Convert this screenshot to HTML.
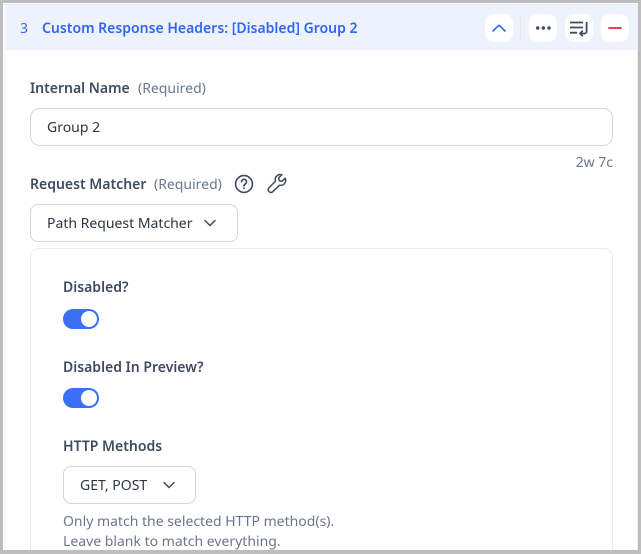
<!DOCTYPE html>
<html><head><meta charset="utf-8"><style>
html,body{margin:0;padding:0;width:641px;height:554px;overflow:hidden}
body{position:relative;background:#bdbdbd;font-family:"Noto Sans","Noto Sans CJK SC","Liberation Sans",sans-serif;font-size:14px}
#r{position:absolute;left:0;top:0;width:641px;height:554px;overflow:hidden}
#r div,#r svg{position:absolute}
#r .t{white-space:nowrap;line-height:20px;margin-top:1px}
.lab{color:#3f4a5f;font-weight:600}
.req{color:#6b7689;font-weight:400}
.btn{background:#fff;border-radius:9px;width:28px;height:28px;top:14px}
.box{background:#fff;border:1px solid #d2d6e0;box-sizing:border-box}
.tog{width:36px;height:20px;border-radius:10px;background:#3a6ff7}
.tog i{position:absolute;right:2px;top:2px;width:16px;height:16px;border-radius:50%;background:#fff;display:block}
</style></head><body><div id="r">
<div style="left:3px;top:3px;width:635px;height:547px;background:#fff"></div>
<div style="left:3px;top:4px;width:634px;height:1px;background:#e8eaf0"></div>
<div style="left:5px;top:5px;width:632px;height:45px;background:#eef2fd"></div>
<div style="left:637px;top:5px;width:1px;height:545px;background:#eceef3"></div>
<div style="left:5px;top:5px;width:1px;height:545px;background:#f3f4f7"></div>

<div class="t" style="left:20px;top:18px;color:#2f66f0">3</div>
<div class="t" style="left:42px;top:18px;color:#2f66f0;font-weight:600">Custom Response Headers: [Disabled] Group 2</div>

<div class="btn" style="left:485px"></div>
<svg style="left:485px;top:14px" width="28" height="28" fill="none"><path d="M8 17 14 11.200 20 17" stroke="#2f66f0" stroke-width="1.600" stroke-linecap="round" stroke-linejoin="round"/></svg>
<div style="left:520px;top:14px;width:1px;height:28px;background:#e8e8ee"></div>
<div class="btn" style="left:529px"></div>
<svg style="left:529px;top:14px" width="28" height="28" fill="#3f4a5f"><circle cx="8.700" cy="14" r="1.700"/><circle cx="14.300" cy="14" r="1.700"/><circle cx="20" cy="14" r="1.700"/></svg>
<div class="btn" style="left:565px"></div>
<svg style="left:565px;top:14px" width="28" height="28" fill="none" stroke="#3f4a5f" stroke-width="1.800"><path d="M5 8.500h13M5 13.500h13M5 18.700h7M21.600 8v9.500a2 2 0 0 1-2 2h-4.500"/><path d="M17.300 17.200 15 19.500l2.300 2.300" stroke-linecap="round" stroke-linejoin="round"/></svg>
<div class="btn" style="left:601px"></div>
<svg style="left:601px;top:14px" width="28" height="28" fill="none"><path d="M7.300 14h13.400" stroke="#e5484d" stroke-width="2"/></svg>

<div class="t lab" style="left:30px;top:78px">Internal Name</div>
<div class="t req" style="left:138px;top:78px">(Required)</div>
<div class="box" style="left:30px;top:108px;width:583px;height:38px;border-radius:10px"></div>
<div class="t" style="left:47px;top:117px;color:#2b3445">Group 2</div>
<div class="t req" style="right:28px;top:152px">2w 7c</div>

<div class="t lab" style="left:30px;top:174px">Request Matcher</div>
<div class="t req" style="left:154px;top:174px">(Required)</div>
<svg style="left:234px;top:173px" width="20" height="22" fill="none" stroke="#3f4a5f" stroke-width="1.600"><circle cx="10" cy="11" r="8.400"/><path d="M7.500 8.800a2.500 2.500 0 1 1 3.800 2.200c-.9.500-1.300 1-1.300 2" stroke-linecap="round"/><circle cx="10" cy="15.300" r=".4" fill="#3f4a5f" stroke-width="1"/></svg>
<svg style="left:266px;top:173px" width="22" height="22" fill="none" stroke="#3f4a5f" stroke-width="1.500" stroke-linejoin="round"><path d="M19.200 5.200l-3.200 3.200-2.700-.7-.7-2.700 3.200-3.200a5 5 0 0 0-6.300 6.300L2.800 15a2.300 2.300 0 0 0 0 3.300l.5.500a2.300 2.300 0 0 0 3.300 0l7-6.600a5 5 0 0 0 5.600-7z"/></svg>

<div class="box" style="left:30px;top:204px;width:208px;height:38px;border-radius:8px"></div>
<div class="t" style="left:47px;top:213px;color:#2b3445">Path Request Matcher</div>
<svg style="left:203px;top:217px" width="14" height="12" fill="none"><path d="M2 3.500l5 5 5-5" stroke="#3f4a5f" stroke-width="1.500" stroke-linecap="round" stroke-linejoin="round"/></svg>

<div style="left:30px;top:248px;width:583px;height:320px;border:1px solid #e9ebf0;border-radius:9px;box-sizing:border-box"></div>

<div class="t lab" style="left:63px;top:277px">Disabled?</div>
<div class="tog" style="left:63px;top:309px"><i></i></div>
<div class="t lab" style="left:63px;top:357px">Disabled In Preview?</div>
<div class="tog" style="left:63px;top:388px"><i></i></div>
<div class="t lab" style="left:63px;top:436px">HTTP Methods</div>
<div class="box" style="left:63px;top:466px;width:133px;height:38px;border-radius:8px"></div>
<div class="t" style="left:80px;top:475px;color:#2b3445">GET, POST</div>
<svg style="left:162px;top:479px" width="14" height="12" fill="none"><path d="M2 3.500l5 5 5-5" stroke="#3f4a5f" stroke-width="1.500" stroke-linecap="round" stroke-linejoin="round"/></svg>
<div class="t req" style="left:63px;top:511px">Only match the selected HTTP method(s).</div>
<div class="t req" style="left:63px;top:531px">Leave blank to match everything.</div>

<div style="left:0;top:550px;width:641px;height:4px;background:#bdbdbd"></div>
</div></body></html>
